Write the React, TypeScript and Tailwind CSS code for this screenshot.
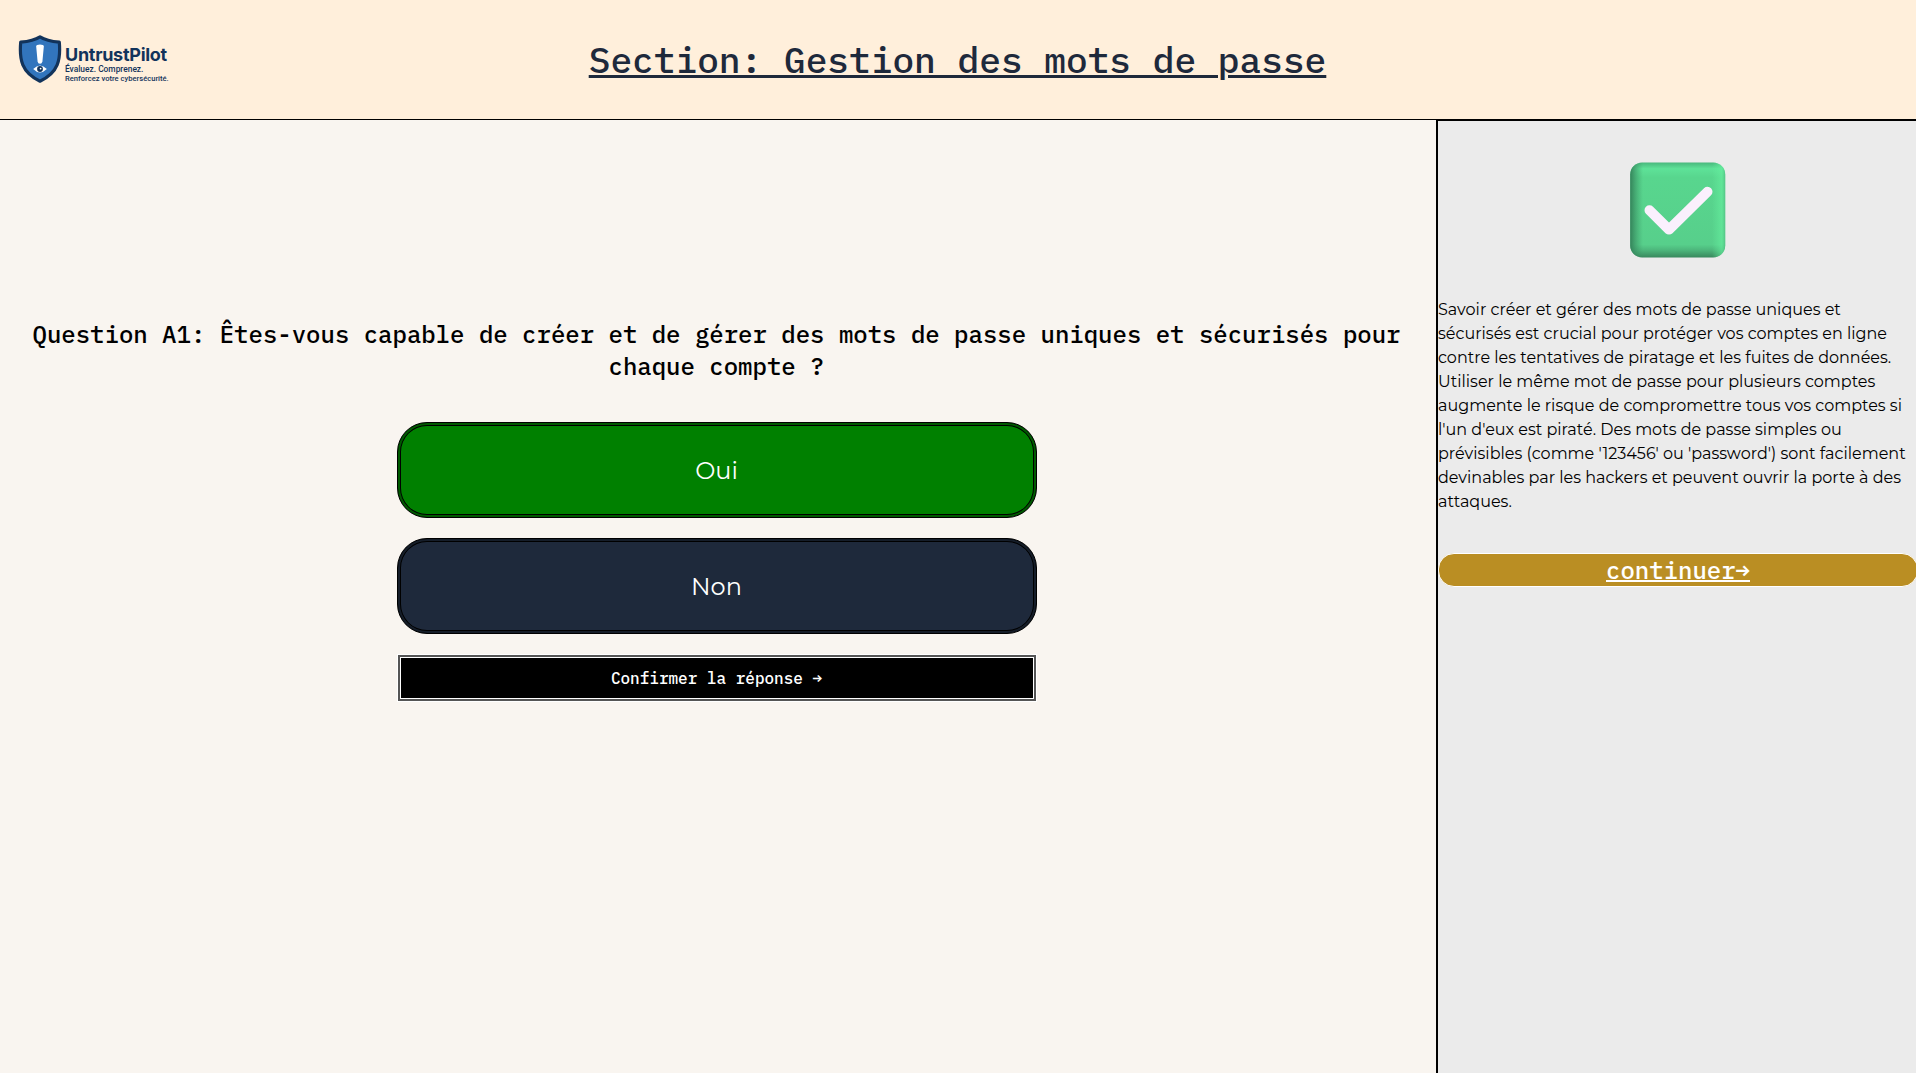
function Logo() {
  return (
    <div className="flex items-start gap-[2px] text-[#12335b]">
      <svg className="h-[48px] w-[44px] shrink-0" viewBox="0 0 44 48">
        <path
          d="M22 1.8 C28 5.6 35 6.6 41.3 7.2 C42.8 24.5 40.5 37.5 22 46.2 C3.5 37.5 1.2 24.5 2.7 7.2 C9 6.6 16 5.6 22 1.8Z"
          fill="#3275bd"
          stroke="#12335b"
          strokeWidth="3.2"
          strokeLinejoin="round"
        />
        <path d="M18.2 11.4 Q18.2 9.6 22 9.6 Q25.8 9.6 25.8 11.4 L24.4 26.6 Q24 28.8 22 28.8 Q20 28.8 19.6 26.6Z" fill="#fff" />
        <path d="M15.2 34 Q22 26.8 28.8 34 Q22 41 15.2 34Z" fill="#fff" />
        <circle cx="22" cy="34" r="2.9" fill="#12335b" />
        <circle cx="22.6" cy="33.6" r="0.9" fill="#fff" />
      </svg>
      <div className="whitespace-nowrap pt-[10px]">
        <p className="pl-px font-['Inter',sans-serif] text-[18px] leading-[20px] font-bold tracking-[-0.28px]">UntrustPilot</p>
        <p className="pl-px font-['Roboto',sans-serif] text-[8.4px] leading-[9px] font-medium">Évaluez. Comprenez.</p>
        <p className="pl-px font-['Roboto',sans-serif] text-[7.6px] leading-[10px] font-medium">Renforcez votre cybersécurité.</p>
      </div>
    </div>
  );
}

function CheckMark() {
  return (
    <svg className="ml-[2px] h-24 w-24" viewBox="0 0 96 96">
      <defs>
        <linearGradient id="face" x1="0" y1="0" x2="0" y2="1">
          <stop offset="0" stopColor="#47b57a" />
          <stop offset="0.07" stopColor="#5ee298" />
          <stop offset="0.16" stopColor="#58d68e" />
          <stop offset="0.86" stopColor="#57cf8b" />
          <stop offset="0.92" stopColor="#4cb57b" />
          <stop offset="1" stopColor="#37855b" />
        </linearGradient>
        <linearGradient id="left">
          <stop offset="0" stopColor="#327e57" stopOpacity="0.95" />
          <stop offset="1" stopColor="#3d9968" stopOpacity="0" />
        </linearGradient>
        <linearGradient id="right">
          <stop offset="0" stopColor="#66f09f" stopOpacity="0" />
          <stop offset="0.7" stopColor="#66f09f" stopOpacity="0.6" />
          <stop offset="1" stopColor="#4db77d" stopOpacity="0.8" />
        </linearGradient>
        <clipPath id="tile">
          <rect x="0.2" y="0.5" width="95" height="95" rx="12" />
        </clipPath>
      </defs>
      <g clipPath="url(#tile)">
        <rect width="96" height="96" fill="url(#face)" />
        <rect width="13" height="96" fill="url(#left)" />
        <rect x="82" width="14" height="96" fill="url(#right)" />
      </g>
      <path d="M19.5 48.2 L39 67.6 L77.5 29.8" fill="none" stroke="#faf0fd" strokeWidth="10" strokeLinecap="round" strokeLinejoin="round" />
    </svg>
  );
}

export default function App() {
  return (
    <div className="flex h-[1073px] flex-col overflow-hidden bg-[#f9f5f0] font-['Montserrat','Inter',sans-serif] text-black">
      <header className="grid h-[120px] shrink-0 grid-cols-[1fr_auto_1fr] items-center border-b border-black bg-[#ffefdb] pr-px">
        <div className="pl-[18px]">
          <Logo />
        </div>
        <h1 className="font-['IBM_Plex_Mono','Liberation_Mono',monospace] text-[36.16px] leading-10 font-medium text-[#1e293b] underline decoration-[3px]">
          Section: Gestion des mots de passe
        </h1>
      </header>
      <div className="flex min-h-0 flex-1">
        <main className="flex flex-1 flex-col items-center pt-[198px] pr-[3px]">
          <h2 className="px-6 text-center font-['IBM_Plex_Mono','Liberation_Mono',monospace] text-2xl font-medium">
            Question A1: Êtes-vous capable de créer et de gérer des mots de passe uniques et sécurisés pour chaque compte ?
          </h2>
          <div className="mt-10 flex w-[640px] flex-col gap-5 text-2xl text-white">
            <button className="h-24 rounded-[30px] border border-black bg-[#008000] pt-0.5 shadow-[inset_0_0_0_2px_#005a00,inset_0_0_0_3px_#000]">Oui</button>
            <button className="h-24 rounded-[30px] border border-black bg-[#1e293b] pt-0.5 shadow-[inset_0_0_0_2px_#151d29,inset_0_0_0_3px_#000]">Non</button>
            <button className="h-12 border border-white bg-black font-['IBM_Plex_Mono','Liberation_Mono',monospace] text-base font-medium shadow-[inset_0_0_0_2px_#555,inset_0_0_0_3px_#fff]">
              Confirmer la réponse →
            </button>
          </div>
        </main>
        <aside className="flex w-[480px] shrink-0 flex-col items-center border-t border-l-2 border-black bg-[#ebebeb] pt-[41px]">
          <CheckMark />
          <p className="mt-10 w-full text-base font-normal">
            Savoir créer et gérer des mots de passe uniques et sécurisés est crucial pour protéger vos comptes en ligne contre les
            tentatives de piratage et les fuites de données. Utiliser le même mot de passe pour plusieurs comptes augmente le risque
            de compromettre tous vos comptes si l'un d'eux est piraté. Des mots de passe simples ou prévisibles (comme '123456' ou
            'password') sont facilement devinables par les hackers et peuvent ouvrir la porte à des attaques.
          </p>
          <button className="mt-[39px] h-[34px] w-[480px] shrink-0 self-start rounded-2xl border border-white bg-[#ba8e23] font-['IBM_Plex_Mono','Liberation_Mono',monospace] text-2xl font-medium text-white underline decoration-2">
            continuer→
          </button>
        </aside>
      </div>
    </div>
  );
}
